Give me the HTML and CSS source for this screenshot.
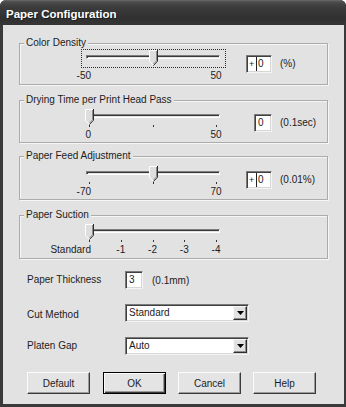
FILE: index.html
```
<!DOCTYPE html>
<html>
<head>
<meta charset="utf-8">
<link rel="stylesheet" href="styles.css">
</head>
<body>
<div class="window">
  <div class="titlebar"><span class="title">Paper Configuration</span></div>
  <div class="client">
    <section class="group group--cd">
      <span class="group-title">Color Density</span>
      <div class="group-row">
        <div class="slider-wrap">
          <div class="slider slider--focus">
            <div class="track"></div>
            <svg class="thumb" style="left:67px" width="9" height="16" viewBox="0 0 9 16"><path d="M0 0H9V11L4.5 15.5L0 11Z" fill="#dedede"/><path d="M0.5 11.5V0.5H8" fill="none" stroke="#fff"/><path d="M0.5 11.3L4.5 15.3" fill="none" stroke="#fff"/><path d="M8.5 0V11.2L4.5 15.5" fill="none" stroke="#2e2e2e"/><path d="M7.5 1V10.8L4.5 14" fill="none" stroke="#8c8c8c"/></svg>
          </div>
          <div class="scale"><span class="lbl lbl--first"><b>-50</b></span><span class="lbl"><b>50</b></span></div>
        </div>
        <div class="edit-cell"><span class="edit edit--signed"><span class="sign">+</span><span class="val">0</span></span></div>
        <span class="unit">(%)</span>
      </div>
    </section>

    <section class="group group--dt">
      <span class="group-title">Drying Time per Print Head Pass</span>
      <div class="group-row">
        <div class="slider-wrap">
          <div class="slider">
            <div class="track"></div>
            <div class="ticks"><i></i><i></i><i></i></div>
            <svg class="thumb" style="left:3px" width="9" height="16" viewBox="0 0 9 16"><path d="M0 0H9V11L4.5 15.5L0 11Z" fill="#dedede"/><path d="M0.5 11.5V0.5H8" fill="none" stroke="#fff"/><path d="M0.5 11.3L4.5 15.3" fill="none" stroke="#fff"/><path d="M8.5 0V11.2L4.5 15.5" fill="none" stroke="#2e2e2e"/><path d="M7.5 1V10.8L4.5 14" fill="none" stroke="#8c8c8c"/></svg>
          </div>
          <div class="scale"><span class="lbl lbl--first"><b>0</b></span><span class="lbl"><b>50</b></span></div>
        </div>
        <div class="edit-cell"><span class="edit edit--small"><span class="val">0</span></span></div>
        <span class="unit">(0.1sec)</span>
      </div>
    </section>

    <section class="group group--pf">
      <span class="group-title">Paper Feed Adjustment</span>
      <div class="group-row">
        <div class="slider-wrap">
          <div class="slider">
            <div class="track"></div>
            <div class="ticks"><i></i><i></i><i></i></div>
            <svg class="thumb" style="left:67px" width="9" height="16" viewBox="0 0 9 16"><path d="M0 0H9V11L4.5 15.5L0 11Z" fill="#dedede"/><path d="M0.5 11.5V0.5H8" fill="none" stroke="#fff"/><path d="M0.5 11.3L4.5 15.3" fill="none" stroke="#fff"/><path d="M8.5 0V11.2L4.5 15.5" fill="none" stroke="#2e2e2e"/><path d="M7.5 1V10.8L4.5 14" fill="none" stroke="#8c8c8c"/></svg>
          </div>
          <div class="scale"><span class="lbl lbl--first"><b>-70</b></span><span class="lbl"><b>70</b></span></div>
        </div>
        <div class="edit-cell"><span class="edit edit--signed"><span class="sign">+</span><span class="val">0</span></span></div>
        <span class="unit">(0.01%)</span>
      </div>
    </section>

    <section class="group group--ps">
      <span class="group-title">Paper Suction</span>
      <div class="group-row">
        <div class="slider-wrap">
          <div class="slider">
            <div class="track"></div>
            <div class="ticks"><i></i><i></i><i></i><i></i><i></i></div>
            <svg class="thumb" style="left:3px" width="9" height="16" viewBox="0 0 9 16"><path d="M0 0H9V11L4.5 15.5L0 11Z" fill="#dedede"/><path d="M0.5 11.5V0.5H8" fill="none" stroke="#fff"/><path d="M0.5 11.3L4.5 15.3" fill="none" stroke="#fff"/><path d="M8.5 0V11.2L4.5 15.5" fill="none" stroke="#2e2e2e"/><path d="M7.5 1V10.8L4.5 14" fill="none" stroke="#8c8c8c"/></svg>
          </div>
          <div class="scale"><span class="lbl lbl--first"><b>Standard</b></span><span class="lbl"><b>-1</b></span><span class="lbl"><b>-2</b></span><span class="lbl"><b>-3</b></span><span class="lbl"><b>-4</b></span></div>
        </div>
      </div>
    </section>

    <div class="form">
      <span class="form-label">Paper Thickness</span>
      <div class="form-ctl"><span class="edit edit--small"><span class="val">3</span></span><span class="form-unit">(0.1mm)</span></div>
      <span class="form-label form-label--low">Cut Method</span>
      <div class="combo"><span class="combo-text">Standard</span><span class="combo-btn"><svg width="7" height="4" viewBox="0 0 7 4"><path d="M0 0H7L3.5 4Z" fill="#000"/></svg></span></div>
      <span class="form-label">Platen Gap</span>
      <div class="combo"><span class="combo-text">Auto</span><span class="combo-btn"><svg width="7" height="4" viewBox="0 0 7 4"><path d="M0 0H7L3.5 4Z" fill="#000"/></svg></span></div>
    </div>

    <div class="buttons">
      <button class="btn btn--first">Default</button>
      <button class="btn btn--default">OK</button>
      <button class="btn">Cancel</button>
      <button class="btn">Help</button>
    </div>
  </div>
</div>
</body>
</html>
```
FILE: styles.css
```
html, body {
  margin: 0;
  background: #ffffff;
}
body {
  font-family: "Liberation Sans", Arial, sans-serif;
  font-size: 10px;
  color: #1c1c1c;
}
.window {
  width: 346px;
  height: 407px;
  display: flex;
  flex-direction: column;
  background: #3a3a3a;
  border-radius: 6px 6px 0 0;
  overflow: hidden;
}
.titlebar {
  flex: none;
  height: 25px;
  box-sizing: border-box;
  padding: 3px 0 0 6px;
  background: linear-gradient(#6a6a6a 0, #4c4c4c 2px, #3c3c3c 7px, #303030 18px, #363636 25px);
}
.title {
  font-weight: bold;
  font-size: 11.5px;
  line-height: 22px;
  color: #fff;
  text-shadow: 1px 1px 0 #1c1c1c;
}
.client {
  flex: 1;
  margin: 0 2px 3px 3px;
  background: #e2e2e2;
  padding: 18px 16px 0 16px;
  display: flex;
  flex-direction: column;
}

/* group boxes */
.group {
  position: relative;
  box-sizing: border-box;
  border: 1px solid #ababab;
  box-shadow: inset 1px 1px 0 #f6f6f6, 1px 1px 0 #f6f6f6;
  padding: 7px 0 0 61px;
  height: 44px;
}
.group--cd { height: 42px; padding-top: 5px; }
.group--dt { height: 43px; margin-top: 15px; }
.group--pf { margin-top: 13px; padding-top: 8px; }
.group--ps { margin-top: 15px; }
.group-title {
  position: absolute;
  top: -7px;
  left: 4px;
  padding: 0 2px;
  line-height: 12px;
  background: #e2e2e2;
  white-space: nowrap;
}
.group-row {
  display: flex;
  align-items: flex-start;
}

/* slider */
.slider-wrap {
  width: 145px;
  flex: none;
}
.slider {
  position: relative;
  box-sizing: border-box;
  width: 145px;
  height: 19px;
  border: 1px dotted transparent;
  display: flex;
  flex-direction: column;
}
.slider--focus { border-color: #2a2a2a; }
.track {
  box-sizing: border-box;
  height: 4px;
  margin: 5px 5px 0 4px;
  border-top: 1px solid #7e7e7e;
  border-left: 1px solid #7e7e7e;
  border-bottom: 1px solid #fff;
  border-right: 1px solid #fff;
  box-shadow: inset 1px 1px 0 #3a3a3a;
  background: #e4e4e4;
}
.ticks {
  margin-top: auto;
  margin-bottom: -1px;
  padding: 0 8px 0 7px;
  display: flex;
  justify-content: space-between;
}
.ticks i {
  display: block;
  width: 1px;
  height: 2px;
  background: #333;
}
.thumb {
  position: absolute;
  top: 0;
  display: block;
}
.scale {
  margin-top: 2px;
  height: 12px;
  padding: 0 10px 0 8px;
  display: flex;
  justify-content: space-between;
  line-height: 12px;
}
.lbl {
  width: 0;
  display: flex;
  justify-content: center;
  white-space: nowrap;
}
.lbl b { font-weight: normal; }
.lbl--first { justify-content: flex-end; }
.lbl--first b { margin-right: -2px; }

/* edits */
.edit-cell {
  width: 26px;
  margin: 6px 0 0 20px;
  display: flex;
  justify-content: flex-end;
}
.edit {
  box-sizing: border-box;
  height: 18px;
  width: 26px;
  display: flex;
  align-items: center;
  background: #fff;
  border: 1px solid;
  border-color: #7a7a7a #f4f4f4 #f4f4f4 #7a7a7a;
  box-shadow: inset 1px 1px 0 #404040, inset -1px -1px 0 #d6d6d6;
  line-height: 14px;
}
.edit--small { width: 18px; }
.edit .val { padding-left: 3px; }
.edit .sign {
  width: 10px;
  box-sizing: border-box;
  padding-left: 2px;
  border-right: 1px solid #222;
  height: 14px;
  font-size: 9px;
}
.edit--signed .val { padding-left: 1px; }
.unit {
  margin: 6px 0 0 8px;
  line-height: 18px;
  white-space: nowrap;
}

/* form rows */
.form {
  margin-top: 12px;
  padding-left: 8px;
  display: grid;
  grid-template-columns: 98px auto;
  row-gap: 15px;
  align-items: center;
  justify-items: start;
}
.form-label {
  line-height: 12px;
  white-space: nowrap;
}
.form-label--low { margin-top: 4px; }
.form-ctl {
  display: flex;
  align-items: center;
}
.form-unit { margin-left: 9px; }
.combo {
  box-sizing: border-box;
  width: 124px;
  height: 18px;
  display: flex;
  align-items: center;
  background: #fff;
  border: 1px solid;
  border-color: #7a7a7a #f4f4f4 #f4f4f4 #7a7a7a;
  box-shadow: inset 1px 1px 0 #404040, inset -1px -1px 0 #d6d6d6;
  padding: 1px;
}
.combo-text {
  flex: 1;
  padding-left: 2px;
  line-height: 14px;
}
.combo-btn {
  box-sizing: border-box;
  width: 14px;
  height: 14px;
  display: flex;
  align-items: center;
  justify-content: center;
  background: #e2e2e2;
  border: 1px solid;
  border-color: #f8f8f8 #2e2e2e #2e2e2e #f8f8f8;
  box-shadow: inset -1px -1px 0 #8c8c8c;
}

/* buttons */
.buttons {
  margin-top: 17px;
  padding-left: 8px;
  display: flex;
  gap: 12px;
}
.btn {
  box-sizing: border-box;
  width: 63px;
  height: 22px;
  padding: 0;
  font: inherit;
  color: #1c1c1c;
  background: #e4e4e4;
  border: 1px solid;
  border-color: #fbfbfb #3a3a3a #3a3a3a #fbfbfb;
  box-shadow: inset -1px -1px 0 #9a9a9a;
}
.btn--first { margin-right: 1px; }
.btn--default {
  border: 1px solid #000;
  box-shadow: inset 1px 1px 0 #fbfbfb, inset -1px -1px 0 #3a3a3a, inset -2px -2px 0 #9a9a9a;
}
```
